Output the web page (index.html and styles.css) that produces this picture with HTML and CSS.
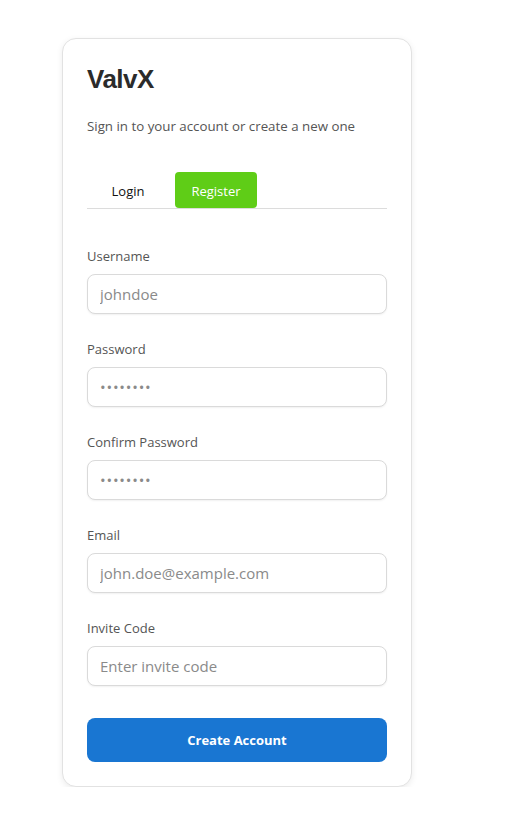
FILE: index.html
```html
<!DOCTYPE html>
<html lang="en">
<head>
<meta charset="utf-8">
<title>ValvX</title>
<link rel="stylesheet" href="styles.css">
</head>
<body>
<main class="page">
  <section class="card">
    <h1 class="title">ValvX</h1>
    <p class="subtitle">Sign in to your account or create a new one</p>
    <div class="tabs">
      <button class="tab">Login</button>
      <button class="tab tab-active">Register</button>
    </div>
    <form class="form">
      <div class="field">
        <label class="label">Username</label>
        <input class="input" type="text" placeholder="johndoe">
      </div>
      <div class="field">
        <label class="label">Password</label>
        <input class="input input-secret" type="password" placeholder="••••••••">
      </div>
      <div class="field">
        <label class="label">Confirm Password</label>
        <input class="input input-secret" type="password" placeholder="••••••••">
      </div>
      <div class="field">
        <label class="label">Email</label>
        <input class="input" type="email" placeholder="john.doe@example.com">
      </div>
      <div class="field">
        <label class="label">Invite Code</label>
        <input class="input" type="text" placeholder="Enter invite code">
      </div>
      <button class="submit" type="button">Create Account</button>
    </form>
  </section>
</main>
</body>
</html>
```

FILE: styles.css
```css
* { box-sizing: border-box; }
html, body { margin: 0; padding: 0; background: #ffffff; }
body {
  font-family: "Open Sans", "Noto Sans", sans-serif;
  color: #333;
}
.page {
  padding: 38px 0 0 62px;
}
.card {
  width: 350px;
  border: 1px solid #e2e2e2;
  border-radius: 14px;
  padding: 24px 24px 24px 24px;
  box-shadow: 0 2px 6px rgba(0,0,0,0.08);
  background: #fff;
}
.title {
  margin: 0;
  font-family: "Liberation Sans", Arial, sans-serif;
  font-weight: 700;
  font-size: 26px;
  letter-spacing: -0.5px;
  line-height: 32px;
  color: #2b2b2b;
}
.subtitle {
  margin: 22px 0 0;
  font-size: 13.3px;
  line-height: 18px;
  color: #555;
}
.tabs {
  display: flex;
  margin-top: 37px;
  border-bottom: 1px solid #dcdcdc;
  padding-left: 0;
}
.tab {
  font-family: inherit;
  font-size: 13px;
  height: 36px;
  padding: 2px 16px 0;
  border: none;
  background: transparent;
  color: #111;
  border-radius: 4px 4px 0 0;
  cursor: pointer;
  width: 82px;
}
.tab-active {
  margin-left: 6px;
  background: #5fcd17;
  color: #fff;
  border-radius: 4px;
}
.form {
  display: flex;
  flex-direction: column;
  margin-top: 38px;
}
.field {
  display: flex;
  flex-direction: column;
  margin-bottom: 26px;
}
.label {
  font-size: 13px;
  line-height: 18px;
  color: #555;
  margin-bottom: 9px;
}
.input {
  height: 40px;
  border: 1px solid #dadada;
  border-radius: 8px;
  padding: 0 12px;
  font-family: inherit;
  font-size: 15px;
  color: #333;
  box-shadow: 0 1px 2px rgba(0,0,0,0.06);
}
.input::placeholder { color: #8a8a8a; }
.input-secret::placeholder { letter-spacing: 0.8px; }
.submit {
  margin-top: 6px;
  height: 44px;
  border: none;
  border-radius: 8px;
  background: #1976d2;
  color: #fff;
  font-family: inherit;
  font-weight: 700;
  font-size: 13px;
  cursor: pointer;
}
```
